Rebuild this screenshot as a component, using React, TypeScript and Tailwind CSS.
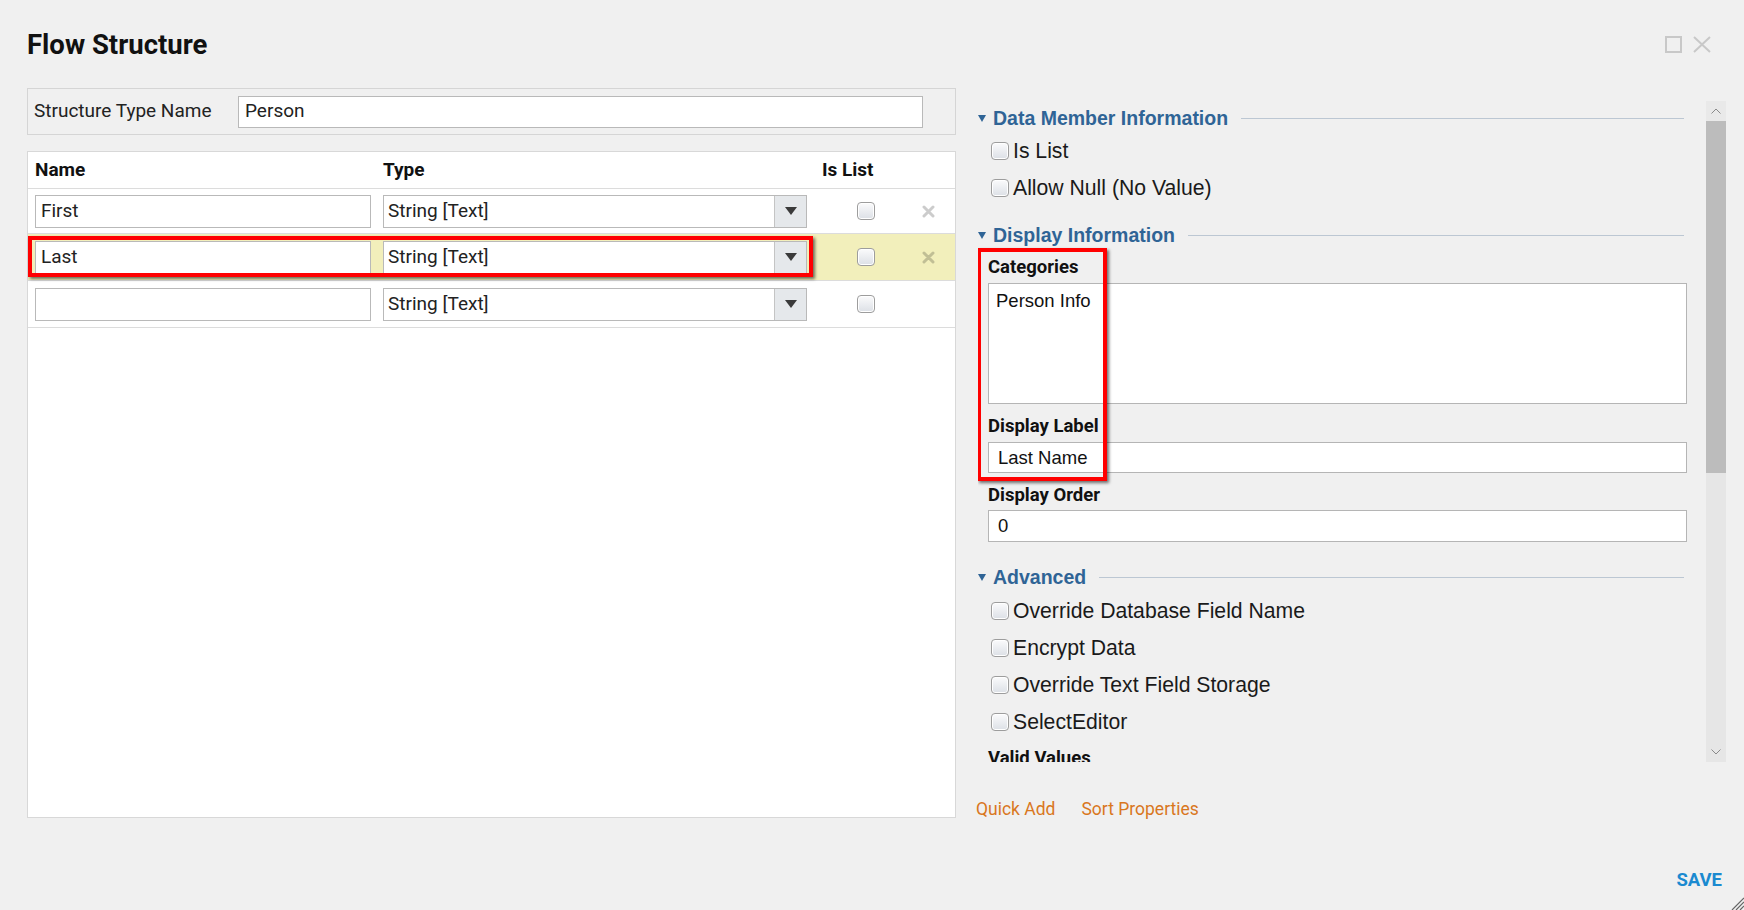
import React from "react";

const Check = () => (
  <div className="w-[18px] h-[18px] shrink-0 rounded-[4px] border border-[#9d9d9d] bg-linear-to-b from-[#fbfbfc] to-[#dce0e6] shadow-[inset_0_0_0_1px_#ffffff]" />
);

const DelX = () => (
  <svg width="13" height="13" viewBox="0 0 13 13">
    <path d="M2 2L11 11M11 2L2 11" stroke="#000" strokeOpacity="0.2" strokeWidth="3" strokeLinecap="round" />
  </svg>
);

const Row = ({ name, hl, del, first }: { name: string; hl?: boolean; del?: boolean; first?: boolean }) => (
  <div className={(first ? "h-[45px] " : "h-[47px] ") + (hl ? "relative flex items-center border-b border-[#dcdcdc] pl-[7px] bg-[#f2efbb]" : "relative flex items-center border-b border-[#dcdcdc] pl-[7px]")}>
    <div className="w-[336px] h-[33px] border border-[#b9b9b9] bg-white flex items-center pl-[5px] text-[19px] text-[#222]">{name}</div>
    <div className="ml-[12px] w-[424px] h-[33px] border border-[#b9b9b9] bg-white flex">
      <div className="flex-1 flex items-center pl-[4px] text-[19px] text-[#222]">String [Text]</div>
      <div className="w-[32px] border-l border-[#c4c4c4] bg-[#e5e8eb] flex items-center justify-center">
        <svg width="12" height="8" viewBox="0 0 12 8"><path d="M0 0H12L6 8Z" fill="#3a3a3a" /></svg>
      </div>
    </div>
    <div className="ml-[50px]"><Check /></div>
    {del ? <div className="ml-[47px] flex items-center"><DelX /></div> : null}
    {hl ? <div className="absolute left-0 top-[2px] w-[785px] h-[41px] border-4 border-[#ff0000] shadow-[2px_2px_3px_rgba(0,0,0,0.55)]" /> : null}
  </div>
);

const Section = ({ title }: { title: string }) => (
  <div className="flex items-center h-[24px]">
    <svg width="8" height="7" viewBox="0 0 8 7" className="shrink-0"><path d="M0 0H8L4 7Z" fill="#2f6496" /></svg>
    <span className="ml-[7px] font-['Liberation_Sans',Arial,sans-serif] font-bold text-[19.5px] leading-[24px] text-[#2f6496] whitespace-nowrap">{title}</span>
    <div className="flex-1 h-px bg-[#bcc7d3] ml-[13px] mr-[3px]" />
  </div>
);

const CheckRow = ({ label }: { label: string }) => (
  <div className="flex items-center h-[37px] pl-[13px] gap-[4px]">
    <Check />
    <span className="font-['Liberation_Sans',Arial,sans-serif] text-[21.2px] text-[#1a1a1a] leading-[24px]">{label}</span>
  </div>
);

const Label = ({ text, cls }: { text: string; cls: string }) => (
  <div className={cls}>
    <div className="pl-[10px] font-bold text-[18.5px] leading-[20px] text-[#111]">{text}</div>
  </div>
);

export default function App() {
  return (
    <div className="relative w-[1744px] h-[910px] bg-[#f0f0f0] font-[Roboto,sans-serif] overflow-hidden">
      {/* header */}
      <div className="flex items-center justify-between pt-[29px] pl-[27px] pr-[33px]">
        <div className="text-[27.5px] leading-[31px] font-bold text-[#111]">Flow Structure</div>
        <div className="flex items-center gap-[11px]">
          <div className="w-[17px] h-[17px] border-2 border-[#c8c8c8]" />
          <svg width="18" height="17" viewBox="0 0 18 17"><path d="M1 1L17 16M17 1L1 16" stroke="#c8c8c8" strokeWidth="2" /></svg>
        </div>
      </div>

      {/* main */}
      <div className="flex mt-[28px]">
        {/* left column */}
        <div className="ml-[27px] w-[929px] flex flex-col">
          <div className="h-[47px] border border-[#d5d5d5] bg-[#f0f0f0] flex items-center pl-[6px]">
            <div className="w-[204px] text-[19px] text-[#222]">Structure Type Name</div>
            <div className="w-[685px] h-[32px] border border-[#b9b9b9] bg-white flex items-center pl-[6px] text-[19px] text-[#222]">Person</div>
          </div>
          <div className="mt-[16px] w-[929px] h-[667px] border border-[#d8d8d8] bg-white">
            <div className="flex items-center h-[37px] border-b border-[#dcdcdc] pl-[7px] font-bold text-[19px] leading-[20px] text-[#111]">
              <div className="w-[348px]">Name</div>
              <div className="w-[439px]">Type</div>
              <div>Is List</div>
            </div>
            <Row name="First" del first />
            <Row name="Last" hl del />
            <Row name="" />
          </div>
        </div>

        {/* right column */}
        <div className="ml-[22px] w-[748px] flex flex-col mt-[13px]">
          <div className="flex h-[661px]">
            <div className="relative w-[709px] h-full overflow-hidden pt-[5px]">
              <Section title="Data Member Information" />
              <div className="mt-[2px]"><CheckRow label="Is List" /></div>
              <CheckRow label="Allow Null (No Value)" />
              <div className="mt-[17px]"><Section title="Display Information" /></div>
              <Label text="Categories" cls="mt-[10px]" />
              <div className="mt-[6px] ml-[10px] h-[121px] border border-[#b5b5b5] bg-white pl-[7px] pt-[6px] font-['Liberation_Sans',Arial,sans-serif] text-[18.5px] leading-[22px] text-[#111]">Person Info</div>
              <Label text="Display Label" cls="mt-[12px]" />
              <div className="mt-[6px] ml-[10px] h-[31px] border border-[#b5b5b5] bg-white pl-[9px] flex items-center font-['Liberation_Sans',Arial,sans-serif] text-[18.5px] text-[#111]">Last Name</div>
              <Label text="Display Order" cls="mt-[12px]" />
              <div className="mt-[5px] ml-[10px] h-[32px] border border-[#b5b5b5] bg-white pl-[9px] flex items-center font-['Liberation_Sans',Arial,sans-serif] text-[18.5px] text-[#111]">0</div>
              <div className="mt-[23px]"><Section title="Advanced" /></div>
              <div className="mt-[3px]"><CheckRow label="Override Database Field Name" /></div>
              <CheckRow label="Encrypt Data" />
              <CheckRow label="Override Text Field Storage" />
              <CheckRow label="SelectEditor" />
              <Label text="Valid Values" cls="mt-[8px]" />
              <div className="absolute left-[-1px] top-[147px] w-[130px] h-[233px] border-4 border-[#ff0000] shadow-[2px_2px_3px_rgba(0,0,0,0.55)]" />
            </div>
            <div className="ml-[19px] w-[20px] h-full bg-[#e6e6e6] flex flex-col">
              <div className="h-[20px] bg-[#e9e9e9] flex items-center justify-center">
                <svg width="10" height="6" viewBox="0 0 10 6"><path d="M0.5 5.5L5 1L9.5 5.5" stroke="#8a8a8a" strokeWidth="1" fill="none" /></svg>
              </div>
              <div className="h-[352px] bg-[#bcbcbc]" />
              <div className="flex-1" />
              <div className="h-[20px] flex items-center justify-center">
                <svg width="10" height="6" viewBox="0 0 10 6"><path d="M0.5 0.5L5 5L9.5 0.5" stroke="#8a8a8a" strokeWidth="1" fill="none" /></svg>
              </div>
            </div>
          </div>
          <div className="mt-[37px] -ml-[2px] flex gap-[26px] text-[17.5px] leading-[20px] text-[#d9771e]">
            <span>Quick Add</span>
            <span>Sort Properties</span>
          </div>
        </div>
      </div>

      {/* footer */}
      <div className="flex justify-end pr-[22px] mt-[51px]">
        <span className="font-bold text-[18.5px] leading-[20px] text-[#1b8ad0]">SAVE</span>
      </div>

      <svg className="absolute right-0 bottom-0" width="14" height="14" viewBox="0 0 14 14">
        <path d="M14 2L2 14M14 6L6 14M14 10L10 14" stroke="#666" strokeWidth="1.2" />
      </svg>
    </div>
  );
}
